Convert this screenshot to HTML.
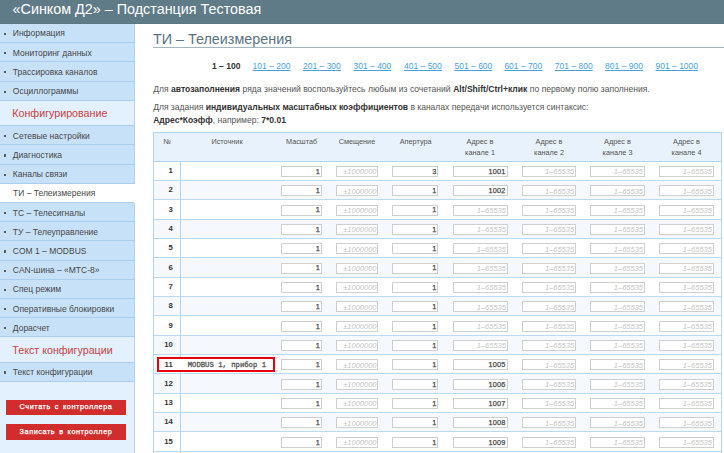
<!DOCTYPE html><html><head><meta charset="utf-8"><style>
html,body{margin:0;padding:0;}
body{width:724px;height:453px;overflow:hidden;position:relative;background:#fff;font-family:"Liberation Sans",sans-serif;color:#444;}
.abs{position:absolute;}
#hdr{left:0;top:0;width:724px;height:23px;background:#5f7b88;border-bottom:1px solid #5a7683;}
#hdr span{position:absolute;left:12.6px;top:1.1px;font-size:14.35px;line-height:17px;color:#fff;white-space:nowrap;}
#sb{left:0;top:24px;width:134px;height:429px;background:#e3f0fd;border-right:1px solid #b3d3f0;}
.it{position:absolute;left:0;width:134px;background:#c7e1f9;border-top:1px solid #a9cdef;}
.it span{position:absolute;left:12.8px;font-size:8.5px;line-height:10px;white-space:nowrap;color:#474747;}
.it i{position:absolute;left:4.2px;width:2.1px;height:2.1px;background:#5a5a5a;}
.sec{position:absolute;left:0;width:134px;background:#e3f0fd;border-top:1px solid #a9cdef;}
.sec span{position:absolute;left:12.3px;font-size:10.7px;line-height:12px;white-space:nowrap;color:#c84340;}
.act{position:absolute;left:0;width:135px;background:#fff;}
.act:before{content:'';position:absolute;left:0;top:-1px;width:134px;height:1px;background:#a9cdef;}
.btn{position:absolute;left:6px;width:120px;background:#d22d2d;color:#fff;font-weight:normal;font-size:7.3px;text-align:center;letter-spacing:0.55px;word-spacing:1.4px;white-space:nowrap;-webkit-text-stroke:0.25px #fff;}
#title{left:153px;top:30.8px;font-size:14.35px;line-height:17px;color:#5b7280;white-space:nowrap;}
#tline{left:153px;top:46.5px;width:571px;height:1px;background:#a3b6c0;}
.pg{position:absolute;top:60.6px;font-size:8.5px;line-height:10px;white-space:nowrap;}
.pg a{color:#4aa2dc;text-decoration:underline;}
.pg b{color:#333;}
.txt{position:absolute;left:153.2px;font-size:8.55px;line-height:10px;white-space:nowrap;color:#555;}
.txt b{color:#333;}
#tbl{left:153px;top:132px;width:567px;height:330px;border:1px solid #b4d5f0;border-bottom:none;}
#th{left:0;top:0;width:567px;height:27.8px;background:#e8f2fc;border-bottom:1px solid #b4d5f0;}
.hc{position:absolute;font-size:7.3px;line-height:10.8px;text-align:center;color:#555;white-space:nowrap;}
.row{position:absolute;left:0;width:567px;border-bottom:1px solid #bcd9f2;}
.row.e{background:#f5f9fd;}
.vd{position:absolute;left:26px;top:29px;width:1px;height:330px;background:#b4d5f0;}
.num{position:absolute;left:0;top:-0.8px;width:18.9px;text-align:right;font-weight:bold;font-size:7.7px;line-height:19px;color:#333;}
.inp{position:absolute;height:9px;border:1px solid #cfcfcf;background:#fff;overflow:hidden;box-sizing:content-box;}
.inp span{position:absolute;right:0.3px;top:0;line-height:9px;white-space:nowrap;}
.v{font-family:"Liberation Sans",sans-serif;font-weight:normal;-webkit-text-stroke:0.25px #4a4a4a;color:#4a4a4a;font-size:7.3px;letter-spacing:0.2px;right:1px!important;top:-0.1px!important;}
.ph{font-family:"Liberation Sans",sans-serif;font-style:italic;color:#c4c4c4;font-size:7.5px;right:0.6px!important;top:0.3px!important;}
.src{position:absolute;left:157px;font-family:"Liberation Mono",monospace;font-size:7.25px;line-height:10px;color:#555;-webkit-text-stroke:0.3px #555;white-space:nowrap;}
#red{border:2px solid #e8000e;background:#fff;}
</style></head><body>

<div id="hdr" class="abs"><span>«Синком Д2» – Подстанция Тестовая</span></div>
<div id="sb" class="abs">
<div class="it" style="top:0px;height:18.10px;border-top:none"><i style="top:8.65px"></i><span style="top:4.25px">Информация</span></div>
<div class="it" style="top:18.10px;height:19.30px"><i style="top:9.05px"></i><span style="top:4.65px">Мониторинг данных</span></div>
<div class="it" style="top:37.40px;height:19.20px"><i style="top:9.00px"></i><span style="top:4.60px">Трассировка каналов</span></div>
<div class="it" style="top:56.60px;height:19.20px"><i style="top:9.00px"></i><span style="top:4.60px">Осциллограммы</span></div>
<div class="sec" style="top:75.80px;height:25.20px"><span style="top:6.60px">Конфигурирование</span></div>
<div class="it" style="top:101.00px;height:19.40px"><i style="top:9.10px"></i><span style="top:4.70px">Сетевые настройки</span></div>
<div class="it" style="top:120.40px;height:19.40px"><i style="top:9.10px"></i><span style="top:4.70px">Диагностика</span></div>
<div class="it" style="top:139.80px;height:19.40px"><i style="top:9.10px"></i><span style="top:4.70px">Каналы связи</span></div>
<div class="act" style="top:160.20px;height:18.90px"><span style="position:absolute;left:13px;top:3.95px;font-size:8.5px;line-height:10px;white-space:nowrap;color:#474747">ТИ – Телеизмерения</span></div>
<div class="it" style="top:178.10px;height:19.18px"><i style="top:8.99px"></i><span style="top:4.59px">ТС – Телесигналы</span></div>
<div class="it" style="top:197.28px;height:19.18px"><i style="top:8.99px"></i><span style="top:4.59px">ТУ – Телеуправление</span></div>
<div class="it" style="top:216.46px;height:19.18px"><i style="top:8.99px"></i><span style="top:4.59px">COM 1 – MODBUS</span></div>
<div class="it" style="top:235.64px;height:19.18px"><i style="top:8.99px"></i><span style="top:4.59px">CAN-шина – «МТС-8»</span></div>
<div class="it" style="top:254.82px;height:19.18px"><i style="top:8.99px"></i><span style="top:4.59px">Спец режим</span></div>
<div class="it" style="top:274.00px;height:19.18px"><i style="top:8.99px"></i><span style="top:4.59px">Оперативные блокировки</span></div>
<div class="it" style="top:293.18px;height:19.18px"><i style="top:8.99px"></i><span style="top:4.59px">Дорасчет</span></div>
<div class="sec" style="top:312.36px;height:25.24px"><span style="top:6.62px">Текст конфигурации</span></div>
<div class="it" style="top:337.60px;height:18.90px"><i style="top:8.85px"></i><span style="top:4.45px">Текст конфигурации</span></div>
<div class="abs" style="left:0;top:356.50px;width:134px;height:1px;background:#a9cdef"></div>
<div class="btn" style="top:375.8px;height:15.2px;line-height:13.8px">Считать с контроллера</div>
<div class="btn" style="top:400.1px;height:16.2px;line-height:15.2px">Записать в контроллер</div>
</div>
<div id="title" class="abs">ТИ – Телеизмерения</div>
<div id="tline" class="abs"></div>
<div class="pg" style="left:212px"><b>1 – 100</b></div>
<div class="pg" style="left:252.6px"><a>101 – 200</a></div>
<div class="pg" style="left:303px"><a>201 – 300</a></div>
<div class="pg" style="left:353.5px"><a>301 – 400</a></div>
<div class="pg" style="left:404px"><a>401 – 500</a></div>
<div class="pg" style="left:454.5px"><a>501 – 600</a></div>
<div class="pg" style="left:504.4px"><a>601 – 700</a></div>
<div class="pg" style="left:554.8px"><a>701 – 800</a></div>
<div class="pg" style="left:605.1px"><a>801 – 900</a></div>
<div class="pg" style="left:655.5px"><a>901 – 1000</a></div>
<div class="txt" style="top:84px;word-spacing:0.12px">Для <b>автозаполнения</b> ряда значений воспользуйтесь любым из сочетаний <b>Alt/Shift/Ctrl+клик</b> по первому полю заполнения.</div>
<div class="txt" style="top:102px;word-spacing:-0.1px">Для задания <b>индивидуальных масштабных коэффициентов</b> в каналах передачи используется синтаксис:</div>
<div class="txt" style="top:114.7px"><b>Адрес*Коэфф</b>, например: <b>7*0.01</b></div>
<div id="tbl" class="abs">
<div id="th" class="abs">
<div class="hc" style="left:-26.5px;width:80px;top:3.9px">№</div>
<div class="hc" style="left:33.0px;width:80px;top:3.9px">Источник</div>
<div class="hc" style="left:107.6px;width:80px;top:3.9px">Масштаб</div>
<div class="hc" style="left:163.0px;width:80px;top:3.9px">Смещение</div>
<div class="hc" style="left:221.7px;width:80px;top:3.9px">Апертура</div>
<div class="hc" style="left:286.0px;width:80px;top:3.9px">Адрес в<br>канале 1</div>
<div class="hc" style="left:355.0px;width:80px;top:3.9px">Адрес в<br>канале 2</div>
<div class="hc" style="left:423.5px;width:80px;top:3.9px">Адрес в<br>канале 3</div>
<div class="hc" style="left:492.5px;width:80px;top:3.9px">Адрес в<br>канале 4</div>
</div>
<div class="row" style="top:28.70px;height:18.34px">
<div class="num">1</div>
<div class="inp" style="left:126.8px;top:4.2px;width:39.1px"><span class="v">1</span></div>
<div class="inp" style="left:182.3px;top:4.2px;width:39.8px"><span class="ph">±1000000</span></div>
<div class="inp" style="left:238.1px;top:4.2px;width:44.3px"><span class="v">3</span></div>
<div class="inp" style="left:299.0px;top:4.2px;width:52.5px"><span class="v">1001</span></div>
<div class="inp" style="left:367.9px;top:4.2px;width:51.8px"><span class="ph">1–65535</span></div>
<div class="inp" style="left:436.3px;top:4.2px;width:52.3px"><span class="ph">1–65535</span></div>
<div class="inp" style="left:505.0px;top:4.2px;width:52.5px"><span class="ph">1–65535</span></div>
</div>
<div class="row e" style="top:48.04px;height:18.34px">
<div class="num">2</div>
<div class="inp" style="left:126.8px;top:4.2px;width:39.1px"><span class="v">1</span></div>
<div class="inp" style="left:182.3px;top:4.2px;width:39.8px"><span class="ph">±1000000</span></div>
<div class="inp" style="left:238.1px;top:4.2px;width:44.3px"><span class="v">1</span></div>
<div class="inp" style="left:299.0px;top:4.2px;width:52.5px"><span class="v">1002</span></div>
<div class="inp" style="left:367.9px;top:4.2px;width:51.8px"><span class="ph">1–65535</span></div>
<div class="inp" style="left:436.3px;top:4.2px;width:52.3px"><span class="ph">1–65535</span></div>
<div class="inp" style="left:505.0px;top:4.2px;width:52.5px"><span class="ph">1–65535</span></div>
</div>
<div class="row" style="top:67.38px;height:18.34px">
<div class="num">3</div>
<div class="inp" style="left:126.8px;top:4.2px;width:39.1px"><span class="v">1</span></div>
<div class="inp" style="left:182.3px;top:4.2px;width:39.8px"><span class="ph">±1000000</span></div>
<div class="inp" style="left:238.1px;top:4.2px;width:44.3px"><span class="v">1</span></div>
<div class="inp" style="left:299.0px;top:4.2px;width:52.5px"><span class="ph">1–65535</span></div>
<div class="inp" style="left:367.9px;top:4.2px;width:51.8px"><span class="ph">1–65535</span></div>
<div class="inp" style="left:436.3px;top:4.2px;width:52.3px"><span class="ph">1–65535</span></div>
<div class="inp" style="left:505.0px;top:4.2px;width:52.5px"><span class="ph">1–65535</span></div>
</div>
<div class="row e" style="top:86.72px;height:18.34px">
<div class="num">4</div>
<div class="inp" style="left:126.8px;top:4.2px;width:39.1px"><span class="v">1</span></div>
<div class="inp" style="left:182.3px;top:4.2px;width:39.8px"><span class="ph">±1000000</span></div>
<div class="inp" style="left:238.1px;top:4.2px;width:44.3px"><span class="v">1</span></div>
<div class="inp" style="left:299.0px;top:4.2px;width:52.5px"><span class="ph">1–65535</span></div>
<div class="inp" style="left:367.9px;top:4.2px;width:51.8px"><span class="ph">1–65535</span></div>
<div class="inp" style="left:436.3px;top:4.2px;width:52.3px"><span class="ph">1–65535</span></div>
<div class="inp" style="left:505.0px;top:4.2px;width:52.5px"><span class="ph">1–65535</span></div>
</div>
<div class="row" style="top:106.06px;height:18.34px">
<div class="num">5</div>
<div class="inp" style="left:126.8px;top:4.2px;width:39.1px"><span class="v">1</span></div>
<div class="inp" style="left:182.3px;top:4.2px;width:39.8px"><span class="ph">±1000000</span></div>
<div class="inp" style="left:238.1px;top:4.2px;width:44.3px"><span class="v">1</span></div>
<div class="inp" style="left:299.0px;top:4.2px;width:52.5px"><span class="ph">1–65535</span></div>
<div class="inp" style="left:367.9px;top:4.2px;width:51.8px"><span class="ph">1–65535</span></div>
<div class="inp" style="left:436.3px;top:4.2px;width:52.3px"><span class="ph">1–65535</span></div>
<div class="inp" style="left:505.0px;top:4.2px;width:52.5px"><span class="ph">1–65535</span></div>
</div>
<div class="row e" style="top:125.40px;height:18.34px">
<div class="num">6</div>
<div class="inp" style="left:126.8px;top:4.2px;width:39.1px"><span class="v">1</span></div>
<div class="inp" style="left:182.3px;top:4.2px;width:39.8px"><span class="ph">±1000000</span></div>
<div class="inp" style="left:238.1px;top:4.2px;width:44.3px"><span class="v">1</span></div>
<div class="inp" style="left:299.0px;top:4.2px;width:52.5px"><span class="ph">1–65535</span></div>
<div class="inp" style="left:367.9px;top:4.2px;width:51.8px"><span class="ph">1–65535</span></div>
<div class="inp" style="left:436.3px;top:4.2px;width:52.3px"><span class="ph">1–65535</span></div>
<div class="inp" style="left:505.0px;top:4.2px;width:52.5px"><span class="ph">1–65535</span></div>
</div>
<div class="row" style="top:144.74px;height:18.34px">
<div class="num">7</div>
<div class="inp" style="left:126.8px;top:4.2px;width:39.1px"><span class="v">1</span></div>
<div class="inp" style="left:182.3px;top:4.2px;width:39.8px"><span class="ph">±1000000</span></div>
<div class="inp" style="left:238.1px;top:4.2px;width:44.3px"><span class="v">1</span></div>
<div class="inp" style="left:299.0px;top:4.2px;width:52.5px"><span class="ph">1–65535</span></div>
<div class="inp" style="left:367.9px;top:4.2px;width:51.8px"><span class="ph">1–65535</span></div>
<div class="inp" style="left:436.3px;top:4.2px;width:52.3px"><span class="ph">1–65535</span></div>
<div class="inp" style="left:505.0px;top:4.2px;width:52.5px"><span class="ph">1–65535</span></div>
</div>
<div class="row e" style="top:164.08px;height:18.34px">
<div class="num">8</div>
<div class="inp" style="left:126.8px;top:4.2px;width:39.1px"><span class="v">1</span></div>
<div class="inp" style="left:182.3px;top:4.2px;width:39.8px"><span class="ph">±1000000</span></div>
<div class="inp" style="left:238.1px;top:4.2px;width:44.3px"><span class="v">1</span></div>
<div class="inp" style="left:299.0px;top:4.2px;width:52.5px"><span class="ph">1–65535</span></div>
<div class="inp" style="left:367.9px;top:4.2px;width:51.8px"><span class="ph">1–65535</span></div>
<div class="inp" style="left:436.3px;top:4.2px;width:52.3px"><span class="ph">1–65535</span></div>
<div class="inp" style="left:505.0px;top:4.2px;width:52.5px"><span class="ph">1–65535</span></div>
</div>
<div class="row" style="top:183.42px;height:18.34px">
<div class="num">9</div>
<div class="inp" style="left:126.8px;top:4.2px;width:39.1px"><span class="v">1</span></div>
<div class="inp" style="left:182.3px;top:4.2px;width:39.8px"><span class="ph">±1000000</span></div>
<div class="inp" style="left:238.1px;top:4.2px;width:44.3px"><span class="v">1</span></div>
<div class="inp" style="left:299.0px;top:4.2px;width:52.5px"><span class="ph">1–65535</span></div>
<div class="inp" style="left:367.9px;top:4.2px;width:51.8px"><span class="ph">1–65535</span></div>
<div class="inp" style="left:436.3px;top:4.2px;width:52.3px"><span class="ph">1–65535</span></div>
<div class="inp" style="left:505.0px;top:4.2px;width:52.5px"><span class="ph">1–65535</span></div>
</div>
<div class="row e" style="top:202.76px;height:18.34px">
<div class="num">10</div>
<div class="inp" style="left:126.8px;top:4.2px;width:39.1px"><span class="v">1</span></div>
<div class="inp" style="left:182.3px;top:4.2px;width:39.8px"><span class="ph">±1000000</span></div>
<div class="inp" style="left:238.1px;top:4.2px;width:44.3px"><span class="v">1</span></div>
<div class="inp" style="left:299.0px;top:4.2px;width:52.5px"><span class="ph">1–65535</span></div>
<div class="inp" style="left:367.9px;top:4.2px;width:51.8px"><span class="ph">1–65535</span></div>
<div class="inp" style="left:436.3px;top:4.2px;width:52.3px"><span class="ph">1–65535</span></div>
<div class="inp" style="left:505.0px;top:4.2px;width:52.5px"><span class="ph">1–65535</span></div>
</div>
<div class="row" style="top:222.10px;height:18.34px">
<div class="num">11</div>
<div class="inp" style="left:126.8px;top:4.2px;width:39.1px"><span class="v">1</span></div>
<div class="inp" style="left:182.3px;top:4.2px;width:39.8px"><span class="ph">±1000000</span></div>
<div class="inp" style="left:238.1px;top:4.2px;width:44.3px"><span class="v">1</span></div>
<div class="inp" style="left:299.0px;top:4.2px;width:52.5px"><span class="v">1005</span></div>
<div class="inp" style="left:367.9px;top:4.2px;width:51.8px"><span class="ph">1–65535</span></div>
<div class="inp" style="left:436.3px;top:4.2px;width:52.3px"><span class="ph">1–65535</span></div>
<div class="inp" style="left:505.0px;top:4.2px;width:52.5px"><span class="ph">1–65535</span></div>
</div>
<div class="row e" style="top:241.44px;height:18.34px">
<div class="num">12</div>
<div class="inp" style="left:126.8px;top:4.2px;width:39.1px"><span class="v">1</span></div>
<div class="inp" style="left:182.3px;top:4.2px;width:39.8px"><span class="ph">±1000000</span></div>
<div class="inp" style="left:238.1px;top:4.2px;width:44.3px"><span class="v">1</span></div>
<div class="inp" style="left:299.0px;top:4.2px;width:52.5px"><span class="v">1006</span></div>
<div class="inp" style="left:367.9px;top:4.2px;width:51.8px"><span class="ph">1–65535</span></div>
<div class="inp" style="left:436.3px;top:4.2px;width:52.3px"><span class="ph">1–65535</span></div>
<div class="inp" style="left:505.0px;top:4.2px;width:52.5px"><span class="ph">1–65535</span></div>
</div>
<div class="row" style="top:260.78px;height:18.34px">
<div class="num">13</div>
<div class="inp" style="left:126.8px;top:4.2px;width:39.1px"><span class="v">1</span></div>
<div class="inp" style="left:182.3px;top:4.2px;width:39.8px"><span class="ph">±1000000</span></div>
<div class="inp" style="left:238.1px;top:4.2px;width:44.3px"><span class="v">1</span></div>
<div class="inp" style="left:299.0px;top:4.2px;width:52.5px"><span class="v">1007</span></div>
<div class="inp" style="left:367.9px;top:4.2px;width:51.8px"><span class="ph">1–65535</span></div>
<div class="inp" style="left:436.3px;top:4.2px;width:52.3px"><span class="ph">1–65535</span></div>
<div class="inp" style="left:505.0px;top:4.2px;width:52.5px"><span class="ph">1–65535</span></div>
</div>
<div class="row e" style="top:280.12px;height:18.34px">
<div class="num">14</div>
<div class="inp" style="left:126.8px;top:4.2px;width:39.1px"><span class="v">1</span></div>
<div class="inp" style="left:182.3px;top:4.2px;width:39.8px"><span class="ph">±1000000</span></div>
<div class="inp" style="left:238.1px;top:4.2px;width:44.3px"><span class="v">1</span></div>
<div class="inp" style="left:299.0px;top:4.2px;width:52.5px"><span class="v">1008</span></div>
<div class="inp" style="left:367.9px;top:4.2px;width:51.8px"><span class="ph">1–65535</span></div>
<div class="inp" style="left:436.3px;top:4.2px;width:52.3px"><span class="ph">1–65535</span></div>
<div class="inp" style="left:505.0px;top:4.2px;width:52.5px"><span class="ph">1–65535</span></div>
</div>
<div class="row" style="top:299.46px;height:18.34px">
<div class="num">15</div>
<div class="inp" style="left:126.8px;top:4.2px;width:39.1px"><span class="v">1</span></div>
<div class="inp" style="left:182.3px;top:4.2px;width:39.8px"><span class="ph">±1000000</span></div>
<div class="inp" style="left:238.1px;top:4.2px;width:44.3px"><span class="v">1</span></div>
<div class="inp" style="left:299.0px;top:4.2px;width:52.5px"><span class="v">1009</span></div>
<div class="inp" style="left:367.9px;top:4.2px;width:51.8px"><span class="ph">1–65535</span></div>
<div class="inp" style="left:436.3px;top:4.2px;width:52.3px"><span class="ph">1–65535</span></div>
<div class="inp" style="left:505.0px;top:4.2px;width:52.5px"><span class="ph">1–65535</span></div>
</div>
<div class="vd"></div>
</div>
<div id="red" class="abs" style="left:157.2px;top:357.2px;width:113.6px;height:10.6px"><div class="num" style="left:-5.4px;top:-4.6px">11</div><div class="src" style="left:28.5px;top:0.7px">MODBUS 1, прибор 1</div></div>
</body></html>
